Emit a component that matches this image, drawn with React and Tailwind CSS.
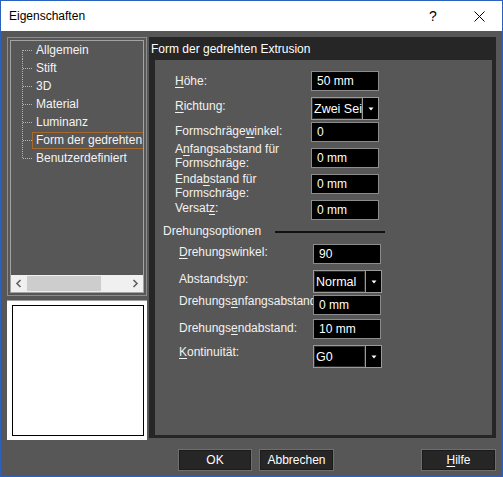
import React from "react";

const FONT = "font-['Liberation_Sans',Arial,sans-serif]";

function U({ pre = "", u, post = "" }) {
  return (
    <>
      {pre}
      <span className="underline underline-offset-2">{u}</span>
      {post}
    </>
  );
}

function TreeRow({ label, first, last, selected }) {
  return (
    <div className="flex h-[18px] items-center whitespace-nowrap">
      <svg width="10" height="18" className="shrink-0">
        <line
          x1="0.5"
          y1={first ? 9 : 0}
          x2="0.5"
          y2={last ? 10 : 18}
          stroke="#b5b5b5"
          strokeDasharray="1 1"
        />
        <line x1="1" y1="9.5" x2="10" y2="9.5" stroke="#b5b5b5" strokeDasharray="1 1" />
      </svg>
      <div
        className={
          "h-[17px] flex items-center pl-[3px] pr-[4px] border leading-[14px] " +
          (selected ? "border-[#a8682c]" : "border-transparent")
        }
      >
        {label}
      </div>
    </div>
  );
}

function Field({ value }) {
  return (
    <div className="relative w-[68px] h-[20px] shrink-0 bg-black border border-[#8c8c8c] flex items-center pl-[5px] text-white leading-[14px]">
      {value}
    </div>
  );
}

function Caret() {
  return (
    <svg width="6" height="4" viewBox="0 0 6 4">
      <path d="M0.5 0.5 H5.5 L3 3.5 Z" fill="#ffffff" />
    </svg>
  );
}

function Combo({ value, boxW = 52 }) {
  return (
    <div className="relative flex h-[23px] shrink-0">
      <div
        className="h-full bg-black border border-[#9a9a9a] shadow-[inset_0_0_0_1px_#2a2a2a] flex items-center pl-[2px] overflow-hidden whitespace-nowrap text-white leading-[14px] text-[12.5px]"
        style={{ width: boxW }}
      >
        {value}
      </div>
      <div className="w-[16px] h-full bg-black border border-l-0 border-[#9a9a9a] flex items-center justify-center">
        <Caret />
      </div>
    </div>
  );
}

function Row({ labelW, mt, lt, children, label, h }) {
  return (
    <div className="flex items-start" style={{ marginTop: mt, height: h }}>
      <div
        className="shrink-0 leading-[14px] whitespace-nowrap text-[#f2f2f2]"
        style={{ width: labelW, marginTop: lt }}
      >
        {label}
      </div>
      {children}
    </div>
  );
}

function Btn({ children, w }) {
  return (
    <div
      className="h-[22px] bg-[#262626] border border-[#6f6f6f] shadow-[inset_0_0_0_1px_#1b1b1b] flex items-center justify-center text-white"
      style={{ width: w }}
    >
      {children}
    </div>
  );
}

export default function App() {
  const tree = [
    "Allgemein",
    "Stift",
    "3D",
    "Material",
    "Luminanz",
    "Form der gedrehten Extrusion",
    "Benutzerdefiniert",
  ];

  return (
    <div
      className={
        "w-[503px] h-[477px] border border-[#2b62bf] bg-[#575757] flex flex-col text-[12px] overflow-hidden " +
        FONT
      }
    >
      {/* title bar */}
      <div className="h-[30px] bg-white flex items-center shrink-0 text-black">
        <div className="pl-[8px] text-[12px]">Eigenschaften</div>
        <div className="ml-auto w-[46px] text-center text-[14px]">?</div>
        <div className="w-[46px] flex justify-center">
          <svg width="11" height="11" viewBox="0 0 11 11">
            <path d="M0.5 0.5 L10.5 10.5 M10.5 0.5 L0.5 10.5" stroke="#000" strokeWidth="1" />
          </svg>
        </div>
      </div>

      {/* body */}
      <div className="flex pt-[6px] pl-[6px] pr-[5px]">
        {/* left column */}
        <div className="w-[140px] flex flex-col">
          <div className="h-[259px] border border-[#8d8d8d] p-[2px]">
            <div className="h-full border border-[#a3a3a3] flex flex-col overflow-hidden">
              <div className="flex-1 pl-[11px] text-[#f4f4f4] overflow-hidden">
                {tree.map((t, i) => (
                  <TreeRow
                    key={t}
                    label={t}
                    first={i === 0}
                    last={i === tree.length - 1}
                    selected={i === 5}
                  />
                ))}
              </div>
              <div className="h-[17px] bg-[#f0f0f0] flex items-center shrink-0">
                <div className="w-[16px] flex justify-center">
                  <svg width="8" height="9" viewBox="0 0 8 9">
                    <path d="M5.5 1 L2 4.5 L5.5 8" stroke="#606060" strokeWidth="1.6" fill="none" />
                  </svg>
                </div>
                <div className="w-[74px] h-[15px] bg-[#cdcdcd]" />
                <div className="flex-1" />
                <div className="w-[16px] flex justify-center">
                  <svg width="8" height="9" viewBox="0 0 8 9">
                    <path d="M2.5 1 L6 4.5 L2.5 8" stroke="#606060" strokeWidth="1.6" fill="none" />
                  </svg>
                </div>
              </div>
            </div>
          </div>
          <div className="mt-[4px] h-[140px] bg-white border-t border-[#a0a0a0] p-[4px] pl-[5px] pr-[3px]">
            <div className="h-full border border-black" />
          </div>
        </div>

        {/* right panel */}
        <div className="ml-[2px] w-[347px] h-[401px] bg-[#262626] flex flex-col">
          <div className="h-[23px] pl-[2px] flex items-center text-white shrink-0">
            Form der gedrehten Extrusion
          </div>
          <div className="ml-[6px] mr-[4px] h-[375px] bg-[#575757] flex flex-col">
            <div className="pl-[20px] flex flex-col">
              <Row labelW={136} mt={11} lt={3} h={20} label={<U u="H" post="öhe:" />}>
                <Field value="50 mm" />
              </Row>
              <Row labelW={136} mt={6} lt={2} h={23} label={<U u="R" post="ichtung:" />}>
                <Combo value="Zwei Seiten" />
              </Row>
              <Row labelW={136} mt={2} lt={2} h={20} label={<U pre="Formschräge" u="w" post="inkel:" />}>
                <Field value="0" />
              </Row>
              <Row
                labelW={136}
                mt={6}
                lt={-6}
                h={20}
                label={
                  <>
                    <U pre="A" u="n" post="fangsabstand für" />
                    <br />
                    Formschräge:
                  </>
                }
              >
                <Field value="0 mm" />
              </Row>
              <Row
                labelW={136}
                mt={6}
                lt={-2}
                h={20}
                label={
                  <>
                    <U pre="Enda" u="b" post="stand für" />
                    <br />
                    Formschräge:
                  </>
                }
              >
                <Field value="0 mm" />
              </Row>
              <Row labelW={136} mt={6} lt={1} h={20} label={<U pre="Versat" u="z" post=":" />}>
                <Field value="0 mm" />
              </Row>
            </div>

            <div className="mt-[4px] pl-[8px] flex items-center h-[14px] leading-[14px] text-[#f2f2f2]">
              <span>Drehungsoptionen</span>
              <div className="ml-[14px] w-[110px] h-[2px] bg-[#111111] mt-[1px]" />
            </div>

            <div className="pl-[24px] flex flex-col">
              <Row labelW={134} mt={6} lt={1} h={20} label={<U u="D" post="rehungswinkel:" />}>
                <Field value="90" />
              </Row>
              <Row labelW={134} mt={6} lt={2} h={23} label={<U pre="Abstands" u="t" post="yp:" />}>
                <Combo value="Normal" boxW={53} />
              </Row>
              <Row labelW={134} mt={2} lt={-1} h={20} label={<U pre="Drehungs" u="a" post="nfangsabstand" />}>
                <Field value="0 mm" />
              </Row>
              <Row labelW={134} mt={4} lt={2} h={20} label={<U pre="Drehungs" u="e" post="ndabstand:" />}>
                <Field value="10 mm" />
              </Row>
              <Row labelW={134} mt={6} lt={0} h={23} label={<U u="K" post="ontinuität:" />}>
                <Combo value="G0" boxW={53} />
              </Row>
            </div>
          </div>
        </div>
      </div>

      {/* buttons */}
      <div className="flex mt-[9px] pl-[177px]">
        <Btn w={74}>OK</Btn>
        <div className="ml-[7px]">
          <Btn w={75}>Abbrechen</Btn>
        </div>
        <div className="ml-[87px]">
          <Btn w={75}>
            <U u="H" post="ilfe" />
          </Btn>
        </div>
      </div>
    </div>
  );
}
